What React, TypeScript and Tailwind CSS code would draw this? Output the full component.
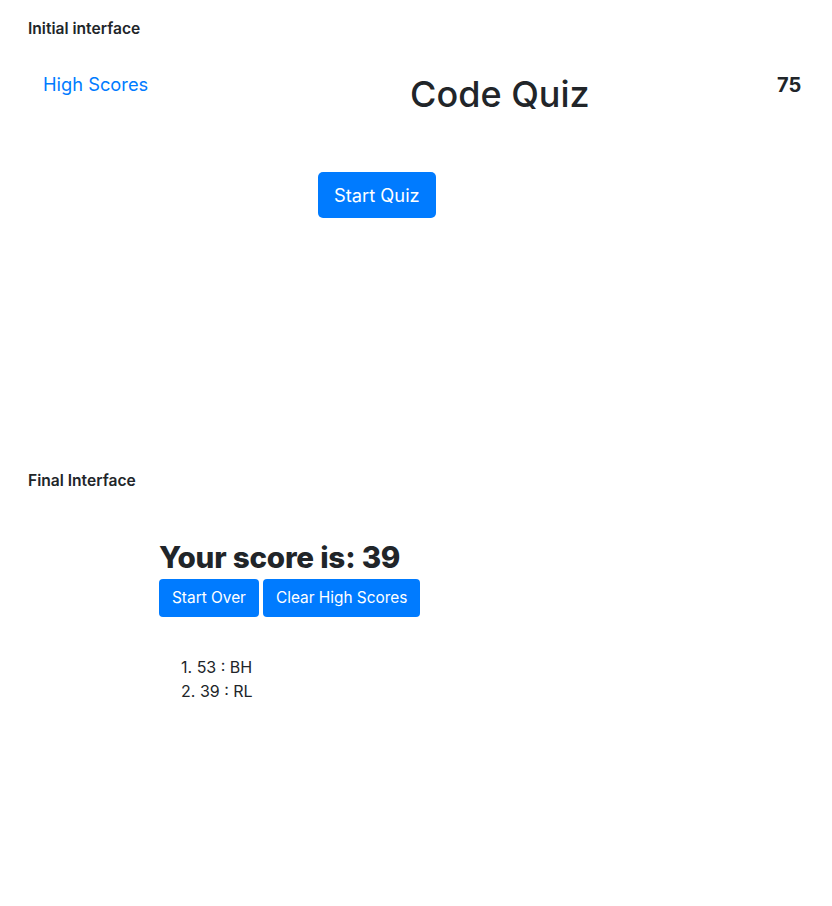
export default function App() {
  const scores = [
    { score: 53, initials: "BH" },
    { score: 39, initials: "RL" },
  ];

  return (
    <div className="min-h-[906px] w-[832px] bg-white font-['Inter',sans-serif] text-[#212529]">
      {/* initial interface */}
      <section className="h-[452px] pt-[19px]">
        <p className="pl-[28px] text-[15.6px] font-semibold leading-5">Initial interface</p>

        <header className="mt-[30px] flex items-start">
          <div className="w-[410px] pl-[43px]">
            <a href="#" className="text-[18.3px] leading-[30px] text-[#007bff]">
              High Scores
            </a>
          </div>
          <h1 className="mt-[2px] w-[367px] text-[36px] font-medium leading-[46px]">Code Quiz</h1>
          <span className="mt-[1px] text-[20px] font-bold leading-[30px]">75</span>
        </header>

        <div className="mt-[55px] pl-[318px]">
          <button className="h-[46px] rounded-[5px] bg-[#007bff] px-4 text-[18.3px] leading-[30px] text-white">
            Start Quiz
          </button>
        </div>
      </section>

      {/* final interface */}
      <section className="pt-[19px]">
        <p className="pl-[28px] text-[15.6px] font-semibold leading-5">Final Interface</p>

        <div className="mt-[48px] pl-[159px]">
          <h3 className="mt-[1px] text-[29.6px] font-extrabold leading-9 tracking-[-0.2px]">Your score is: 39</h3>
          <div className="mt-[4px] flex gap-[4px]">
            <button className="h-[38px] rounded-[4px] bg-[#007bff] px-[13px] text-[15.4px] text-white">
              Start Over
            </button>
            <button className="h-[38px] rounded-[4px] bg-[#007bff] px-[13px] text-[15.4px] text-white">
              Clear High Scores
            </button>
          </div>
          <ol className="mt-[38px] pl-[22px] text-[16px] leading-6">
            {scores.map((s, i) => (
              <li key={s.initials}>
                {i + 1}. {s.score} : {s.initials}
              </li>
            ))}
          </ol>
        </div>
      </section>
    </div>
  );
}
